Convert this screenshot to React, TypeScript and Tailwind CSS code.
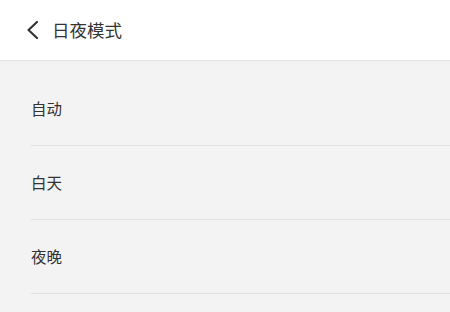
const modes = ["自动", "白天", "夜晚"];

export default function App() {
  return (
    <div
      className="h-[312px] w-[450px] overflow-hidden bg-[#f3f3f3] text-[#333]"
      style={{ fontFamily: '"Noto Sans CJK SC", "Noto Sans", sans-serif' }}
    >
      <header className="flex h-[61px] items-center border-b border-[#e3e3e3] bg-white pl-[25px]">
        <svg width="15" height="20" viewBox="0 0 15 20" fill="none" className="mr-[12px]">
          <path d="M12 2 L3.5 10 L12 18" stroke="#333" strokeWidth="2.2" strokeLinecap="round" strokeLinejoin="round" />
        </svg>
        <h1 className="text-[17.5px] leading-none">日夜模式</h1>
      </header>

      <ul className="pt-[11px] pl-[31px]">
        {modes.map((m) => (
          <li key={m} className="flex h-[74px] items-center border-b border-[#e0e0e0] text-[15.5px]">
            {m}
          </li>
        ))}
      </ul>
    </div>
  );
}
